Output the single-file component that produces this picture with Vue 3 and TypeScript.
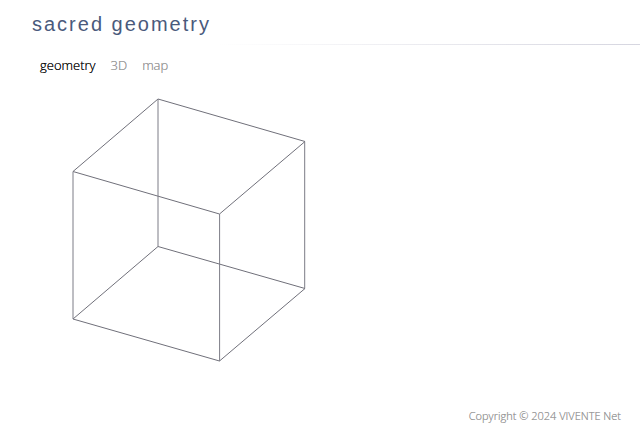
<script setup lang="ts">
import { ref } from 'vue'

const tabs: string[] = ['geometry', '3D', 'map']
const active = ref<string>('geometry')
</script>

<template>
  <div class="page">
    <header class="header">
      <h1 class="title">sacred geometry</h1>
      <div class="rule"></div>
    </header>
    <nav class="nav">
      <a v-for="tab in tabs" :key="tab" :href="'#' + tab" :class="{ active: tab === active }" @click="active = tab">{{ tab }}</a>
    </nav>
    <main class="main">
      <svg class="cube" width="236" height="268" viewBox="71 96 236 268" role="img" aria-label="cube">
        <path class="edge" d="M158 99L305 141.500L219.500 214L73 171.500ZM158 246.500L305 288.500L219.500 361L73 319Z" />
        <path class="upright" d="M158 99V246.500M304.700 141.500V288.500M219.600 214V361M73 171.500V319" />
      </svg>
    </main>
    <footer class="footer">Copyright © 2024 VIVENTE Net</footer>
  </div>
</template>

<style>
body {
  margin: 0;
  background: #fff;
}
</style>

<style scoped>
.page {
  display: flex;
  flex-direction: column;
  min-height: 100vh;
  font-family: "Open Sans", sans-serif;
}
.header {
  padding-top: 12px;
}
.title {
  margin: 0;
  padding-left: 32px;
  font: 400 20px/24px "Liberation Sans", Arial, sans-serif;
  letter-spacing: 2px;
  color: #4a5a7c;
}
.rule {
  height: 1px;
  margin-top: 8px;
  background: linear-gradient(to right, #fff 34%, #d6d6e0);
}
.nav {
  display: flex;
  gap: 15px;
  padding: 10px 40px 0;
  font-size: 13px;
  font-weight: 300;
  line-height: 20px;
}
.nav a {
  color: #999;
  text-decoration: none;
  text-shadow: 0 0 0 currentColor;
}
.nav a.active {
  color: #111;
}
.main {
  flex: 1;
  padding: 21px 71px 0;
}
.cube {
  display: block;
  fill: none;
  stroke-width: 1;
}
.edge {
  stroke: #70707a;
}
.upright {
  stroke: #7c7c86;
}
.footer {
  padding: 0 19px 4px;
  font-size: 11px;
  font-weight: 300;
  line-height: 20px;
  text-align: right;
  color: #999;
  text-shadow: 0 0 0 currentColor;
}
</style>
